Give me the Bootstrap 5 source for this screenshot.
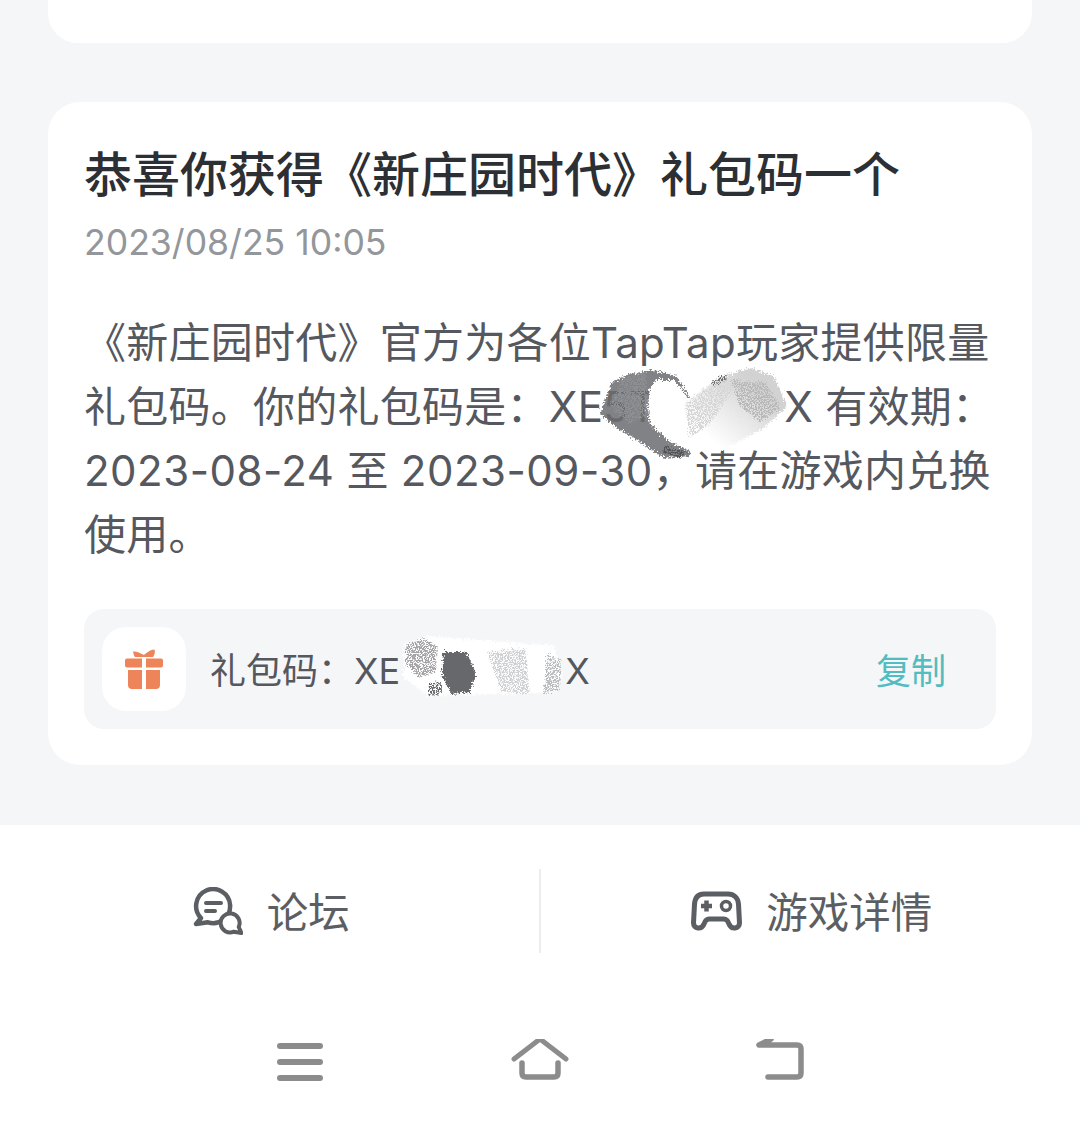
<!DOCTYPE html>
<html lang="zh">
<head>
<meta charset="utf-8">
<title>礼包码</title>
<link rel="stylesheet" href="https://cdn.jsdelivr.net/npm/bootstrap@5.3.0/dist/css/bootstrap.min.css">
<style>
html,body{margin:0;height:1124px;overflow:hidden}
body{background:#f5f6f8;font-family:Inter,"Noto Sans CJK SC","Noto Sans",sans-serif;color:#55585e}
.page-shell{height:1124px}
.stub-card{height:43px;margin:0 48px;background:#fff;border-radius:0 0 30px 30px}
.msg-card{margin:59px 48px 60px;height:663px;padding:36px;background:#fff;border-radius:32px}
.msg-title{font-size:48px;line-height:72px;font-weight:500;color:#2c2f33;margin:1px 0 0;white-space:nowrap}
.msg-date{font-size:35.6px;line-height:50px;color:#93969b;margin-top:7px}
.msg-body{font-size:42px;line-height:64px;margin:43px 0 0;color:#55585e;letter-spacing:.25px}
.num-run{letter-spacing:.5px}
.redact{display:inline-block;width:128px;height:1px}
.redact-small{display:inline-block;width:165px;height:1px}
.code-row{margin-top:42px;height:120px;background:#f5f6f8;border-radius:20px;padding:18px 50px 18px 18px}
.gift-box{width:84px;height:84px;background:#fff;border-radius:24px;flex:none}
.code-text{font-size:36px;margin-left:24px;color:#55585e;white-space:nowrap;padding-top:4px}
.copy-btn{font-size:35px;color:#52bcc1;padding-top:4px}
.scrub{position:absolute;pointer-events:none}
.scrub-a{left:542px;top:252px}
.scrub-b{left:320px;top:520px}
.tab-area{background:#fff;height:299px;padding-top:44px}
.tab-half{height:84px;width:50%;gap:24px}
.tab-left{width:calc(50% + 1px);padding-left:4px}
.tab-right{padding-left:2px}
.tab-split{border-right:2px solid #eceded}
.tab-label{font-size:41.5px;color:#5b5e63;line-height:1;padding-top:5px}
.sys-nav{margin-top:86px;gap:180px}
</style>
</head>
<body>
<div class="page-shell d-flex flex-column">
  <div class="stub-card"></div>
  <div class="msg-card position-relative">
    <h1 class="msg-title">恭喜你获得《新庄园时代》礼包码一个</h1>
    <div class="msg-date">2023/08/25 10:05</div>
    <p class="msg-body">《新庄园时代》官方为各位TapTap玩家提供限量礼包码。你的礼包码是：XE5T<span class="redact"></span>X 有效期：<span class="num-run">2023-08-24</span> 至 <span class="num-run">2023-09-30</span>，请在游戏内兑换使用。</p>
    <div class="code-row d-flex align-items-center justify-content-between">
      <div class="d-flex align-items-center">
        <div class="gift-box d-flex align-items-center justify-content-center">
          <svg width="40" height="42" viewBox="0 0 40 42" fill="#ee8459" aria-hidden="true">
            <path d="M1 12.500a2 2 0 0 1 2-2h15v9H3a2 2 0 0 1-2-2zM22 10.500h15a2 2 0 0 1 2 2v5a2 2 0 0 1-2 2H22zM4 22h14v19H8a4 4 0 0 1-4-4zM22 22h14v15a4 4 0 0 1-4 4H22z"/>
            <path d="M9 3.500c3-.5 7 1.500 11 3.500 3-2.500 7-5.500 10-5.500 1.500 0 1 5.500-1 7.500H11C10 8 9.500 6 9 3.500z"/>
          </svg>
        </div>
        <span class="code-text">礼包码：XE<span class="redact-small"></span>X</span>
      </div>
      <span class="copy-btn">复制</span>
    </div>

    <svg class="scrub scrub-a" width="210" height="120" viewBox="0 0 210 120" aria-hidden="true">
      <defs>
        <filter id="grain" x="-15%" y="-15%" width="130%" height="130%">
          <feTurbulence type="fractalNoise" baseFrequency=".55" numOctaves="2" seed="4" result="n"/>
          <feDisplacementMap in="SourceGraphic" in2="n" scale="8" xChannelSelector="R" yChannelSelector="G"/>
        </filter>
        <filter id="speck" x="-15%" y="-15%" width="130%" height="130%">
          <feTurbulence type="fractalNoise" baseFrequency=".7" numOctaves="2" seed="9" result="n"/>
          <feDisplacementMap in="SourceGraphic" in2="n" scale="8" xChannelSelector="R" yChannelSelector="G" result="d"/>
          <feColorMatrix in="n" type="matrix" values="0 0 0 0 0 0 0 0 0 0 0 0 0 0 0 9 0 0 0 -3.800" result="m"/>
          <feComposite in="d" in2="m" operator="in"/>
        </filter>
        <linearGradient id="fade" x1="0" y1="1" x2="1" y2="0">
          <stop offset=".2" stop-color="#fff"/>
          <stop offset=".75" stop-color="#d2d2d2"/>
        </linearGradient>
      </defs>
      <g filter="url(#grain)">
        <path d="M10 60 22 28 40 20 62 16 86 22 104 50 100 102 74 104 50 88 24 72z" fill="#6b6d71" opacity=".86"/>
        <path d="M60 34 66 26 84 26 104 50 122 70 102 98 80 88 60 70 57 52z" fill="#fff"/>
        <path d="M94 50 128 24 160 14 184 22 197 52 174 74 130 98 104 96z" fill="url(#fade)"/>
      </g>
      <g filter="url(#speck)">
        <path d="M96 50 130 26 150 28 120 70 100 84z" fill="#d6d6d6"/>
        <path d="M142 26 176 28 192 54 170 68 150 52z" fill="#b8b8b8"/>
        <path d="M122 28 138 20 136 26 124 33z" fill="#707070"/>
        <path d="M34 22 56 18 60 60 40 70 20 52z" fill="#8d8f92"/>
        <path d="M76 92 98 98 92 104 72 98z" fill="#505256"/>
      </g>
    </svg>

    <svg class="scrub scrub-b" width="210" height="100" viewBox="0 0 210 100" aria-hidden="true">
      <g filter="url(#grain)">
        <path d="M36 22 60 14 186 24 194 52 188 70 60 74 36 56z" fill="#fff"/>
        <path d="M76 30 98 30 108 50 102 70 84 72 74 54z" fill="#66686c"/>
      </g>
      <g filter="url(#speck)">
        <path d="M38 24 56 16 70 24 68 50 52 56 38 42z" fill="#a3a3a5"/>
        <path d="M60 62 74 60 74 72 62 74z" fill="#66686c"/>
        <path d="M120 30 158 26 162 72 134 70z" fill="#cfd0d2"/>
        <path d="M180 32 194 38 192 68 176 72z" fill="#b9babc"/>
      </g>
    </svg>
  </div>

  <div class="tab-area">
    <div class="d-flex">
      <div class="tab-half tab-left tab-split d-flex align-items-center justify-content-center">
        <svg width="50" height="48" viewBox="0 0 50 48" fill="none" stroke="#5b5e63" aria-hidden="true">
          <path d="M8 31A17 17 0 1 1 15 35.300L3 37z" stroke-width="4.500" stroke-linejoin="round"/>
          <path d="M13 16h15M13 24h9" stroke-width="4" stroke-linecap="round"/>
          <path d="M40.800 44.700A9.500 9.500 0 1 1 45.700 40L48.500 46z" fill="#fff" stroke-width="4" stroke-linejoin="round"/>
        </svg>
        <span class="tab-label">论坛</span>
      </div>
      <div class="tab-half tab-right d-flex align-items-center justify-content-center">
        <svg width="52" height="40" viewBox="0 0 52 40" fill="none" stroke="#5b5e63" aria-hidden="true">
          <path d="M14 3h24c6 0 10 4 10.500 10l1 19c0 6-8 7-10.500 1-1-3-2-5-5-5H19c-3 0-4 2-5 5-2.500 6-10.500 5-10.500-1l1-19C5 7 8 3 14 3z" stroke-width="5" stroke-linejoin="round"/>
          <path d="M11 15h11M16.500 9.500v11" stroke-width="4.500"/>
          <circle cx="36" cy="15" r="4.500" stroke-width="3.500"/>
        </svg>
        <span class="tab-label">游戏详情</span>
      </div>
    </div>
    <div class="sys-nav d-flex justify-content-center">
      <svg width="60" height="56" viewBox="0 0 60 56" fill="none" stroke="#8c8c8c" stroke-width="6" stroke-linecap="round" stroke-linejoin="round" aria-hidden="true">
        <path d="M10 7h40M10 23h40M10 39h40"/>
      </svg>
      <svg width="60" height="56" viewBox="0 0 60 56" fill="none" stroke="#8c8c8c" stroke-width="5" stroke-linecap="round" stroke-linejoin="round" aria-hidden="true">
        <path d="M4 20 30 0l26 20"/>
        <path d="M12 24v10q0 4 4 4h28q4 0 4-4V24" stroke-width="5.500"/>
      </svg>
      <svg width="60" height="56" viewBox="0 0 60 56" fill="none" stroke="#8c8c8c" stroke-width="5.500" stroke-linecap="round" stroke-linejoin="round" aria-hidden="true">
        <path d="M21 0 9 6h38q4 0 4 4v24q0 4-4 4H18"/>
      </svg>
    </div>
  </div>
</div>
<script src="https://cdn.jsdelivr.net/npm/bootstrap@5.3.0/dist/js/bootstrap.bundle.min.js"></script>
</body>
</html>
